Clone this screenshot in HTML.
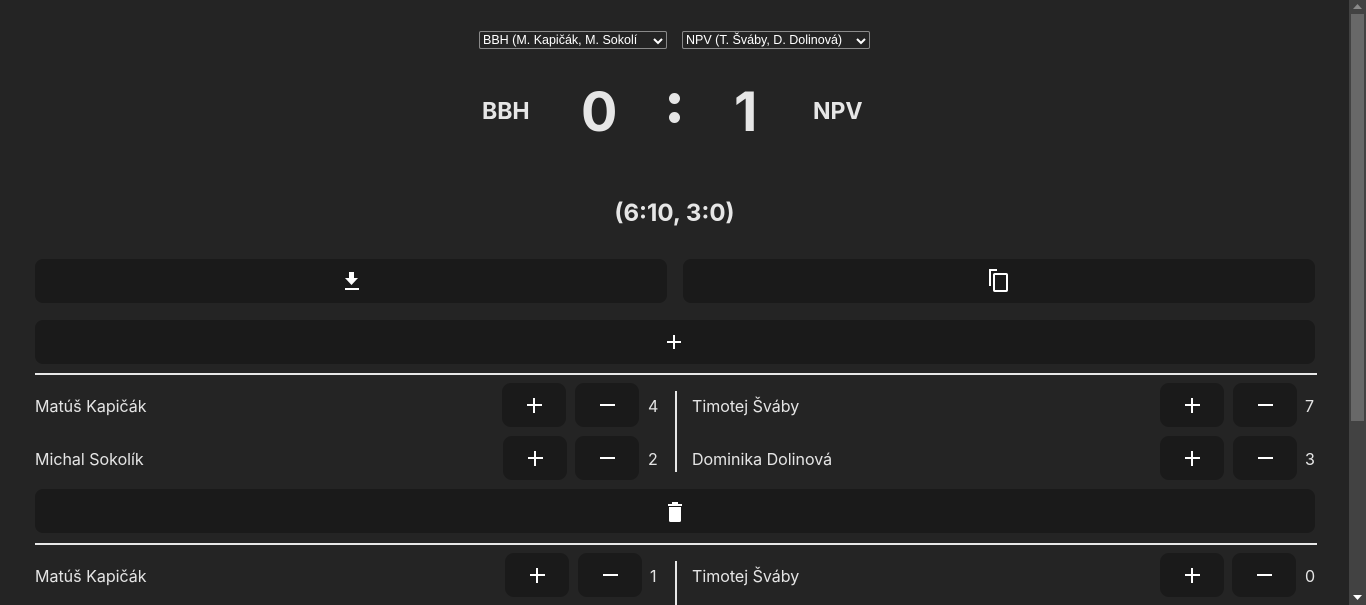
<!DOCTYPE html>
<html><head><meta charset="utf-8"><style>
*{margin:0;padding:0;box-sizing:border-box}
html,body{width:1366px;height:605px;overflow:hidden;background:#242424;font-family:"Inter","Liberation Sans",sans-serif;color:#e6e6e6}
.a{position:absolute}
.btn{position:absolute;background:#1a1a1a;border-radius:8px}
.sel{position:absolute;top:31px;height:18px;border:1px solid #8a8a8a;border-radius:2px;background:#242424;color:#fff;font-family:"Liberation Sans",sans-serif;font-size:12.5px;line-height:16px;padding-left:3px;white-space:nowrap;overflow:hidden}
.sel svg{position:absolute;right:3px;top:5px}
.name{position:absolute;font-size:16px;color:#e4e4e4;line-height:20px}
.num{position:absolute;font-size:16px;color:#e4e4e4;line-height:20px}
.pl,.mi{position:absolute;width:64px;height:44px;background:#1a1a1a;border-radius:9px}
.pl::before{content:"";position:absolute;left:25px;top:21px;width:15px;height:2px;background:#fff}
.pl::after{content:"";position:absolute;left:31px;top:15px;width:2px;height:15px;background:#fff}
.mi::before{content:"";position:absolute;left:25px;top:21px;width:15px;height:2px;background:#fff}
.hr{position:absolute;left:35px;width:1282px;height:2px;background:#e8e8e8}
.vr{position:absolute;left:675px;width:2px;background:#e8e8e8}
</style></head><body>
<div class="sel" style="left:479px;width:188px">BBH (M. Kapičák, M. Sokolí<svg width="10" height="8" viewBox="0 0 10 8"><path d="M1 2l4 4 4-4" stroke="#fff" stroke-width="2" fill="none"/></svg></div>
<div class="sel" style="left:682px;width:188px">NPV (T. Šváby, D. Dolinová)<svg width="10" height="8" viewBox="0 0 10 8"><path d="M1 2l4 4 4-4" stroke="#fff" stroke-width="2" fill="none"/></svg></div>
<div class="a" style="left:482px;top:97px;font-size:23px;font-weight:bold;color:#e6e6e6">BBH</div>
<div class="a" style="left:581px;top:81px;font-size:54px;font-weight:bold;color:#e6e6e6;line-height:64px">0</div>
<div class="a" style="left:669px;top:93px;width:11px;height:11px;border-radius:50%;background:#e6e6e6"></div>
<div class="a" style="left:669px;top:112px;width:11px;height:11px;border-radius:50%;background:#e6e6e6"></div>
<div class="a" style="left:734px;top:81px;font-size:54px;font-weight:bold;color:#e6e6e6;line-height:64px">1</div>
<div class="a" style="left:813px;top:97px;font-size:23px;font-weight:bold;color:#e6e6e6">NPV</div>
<div class="a" style="left:0;width:1349px;top:198px;text-align:center;font-size:24px;font-weight:bold;color:#e6e6e6">(6:10, 3:0)</div>

<div class="btn" style="left:35px;top:259px;width:632px;height:44px"><svg class="a" style="left:309px;top:13px" width="16" height="19" viewBox="0 0 16 19"><path d="M5 0h5v6h4l-6.5 7L1 6h4z" fill="#fff"/><rect x="1" y="16" width="14" height="2" fill="#fff"/></svg></div>
<div class="btn" style="left:683px;top:259px;width:632px;height:44px"><svg class="a" style="left:305px;top:9px" width="22" height="24" viewBox="0 0 22 24"><path d="M2 18V2h7" stroke="#fff" stroke-width="2" fill="none"/><rect x="6" y="6" width="13" height="17" rx="1" stroke="#fff" stroke-width="2" fill="none"/></svg></div>
<div class="btn" style="left:35px;top:320px;width:1280px;height:44px"><div class="a" style="left:632px;top:21px;width:14px;height:2px;background:#fff"></div><div class="a" style="left:638px;top:15px;width:2px;height:14px;background:#fff"></div></div>

<div class="hr" style="top:373px"></div>
<div class="name" style="left:35px;top:396px">Matúš Kapičák</div>
<div class="pl" style="left:502px;top:383px"></div><div class="mi" style="left:575px;top:383px"></div>
<div class="num" style="left:648px;top:396px">4</div>
<div class="name" style="left:35px;top:449px">Michal Sokolík</div>
<div class="pl" style="left:503px;top:436px"></div><div class="mi" style="left:575px;top:436px"></div>
<div class="num" style="left:648px;top:449px">2</div>
<div class="vr" style="top:391px;height:81px"></div>
<div class="name" style="left:692px;top:396px">Timotej Šváby</div>
<div class="pl" style="left:1160px;top:383px"></div><div class="mi" style="left:1233px;top:383px"></div>
<div class="num" style="left:1305px;top:396px">7</div>
<div class="name" style="left:692px;top:449px">Dominika Dolinová</div>
<div class="pl" style="left:1160px;top:436px"></div><div class="mi" style="left:1233px;top:436px"></div>
<div class="num" style="left:1305px;top:449px">3</div>

<div class="btn" style="left:35px;top:489px;width:1280px;height:44px"><svg class="a" style="left:632px;top:13px" width="16" height="20" viewBox="0 0 16 20"><rect x="1" y="2" width="14" height="2" fill="#fff"/><rect x="5" y="0" width="6" height="3" fill="#fff"/><path d="M2 5h12v13.5q0 1.5-1.5 1.5h-9Q2 20 2 18.5z" fill="#fff"/></svg></div>

<div class="hr" style="top:543px"></div>
<div class="name" style="left:35px;top:566px">Matúš Kapičák</div>
<div class="pl" style="left:505px;top:553px"></div><div class="mi" style="left:578px;top:553px"></div>
<div class="num" style="left:650px;top:566px">1</div>
<div class="vr" style="top:561px;height:44px"></div>
<div class="name" style="left:692px;top:566px">Timotej Šváby</div>
<div class="pl" style="left:1160px;top:553px"></div><div class="mi" style="left:1232px;top:553px"></div>
<div class="num" style="left:1305px;top:566px">0</div>

<div class="a" style="left:1349px;top:0;width:17px;height:605px;background:#424242"></div>
<div class="a" style="left:1351px;top:14px;width:13px;height:407px;background:#686868"></div>
<svg class="a" style="left:1353px;top:4px" width="9" height="5"><path d="M0 5L4.5 0L9 5z" fill="#8a8a8a"/></svg>
<svg class="a" style="left:1353px;top:595px" width="9" height="5"><path d="M0 0L4.5 5L9 0z" fill="#fff"/></svg>
</body></html>
